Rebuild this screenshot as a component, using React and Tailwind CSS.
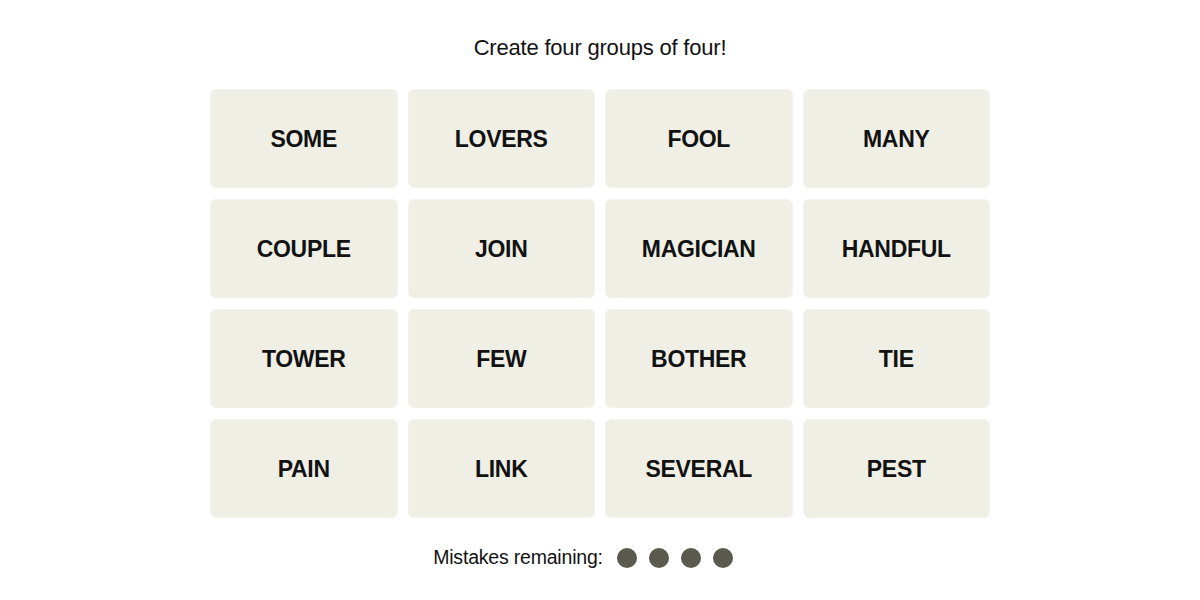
import React from "react";

const words = [
  "SOME", "LOVERS", "FOOL", "MANY",
  "COUPLE", "JOIN", "MAGICIAN", "HANDFUL",
  "TOWER", "FEW", "BOTHER", "TIE",
  "PAIN", "LINK", "SEVERAL", "PEST",
];

export default function App() {
  return (
    <div className="w-[1200px] h-[600px] bg-white flex flex-col items-center" style={{ fontFamily: '"Liberation Sans", Arial, sans-serif' }}>
      <div className="mt-[34px] h-[26px] flex items-center text-[22px] text-[#121212] tracking-[-0.2px]">
        Create four groups of four!
      </div>
      <div className="mt-[29px] grid grid-cols-4 gap-x-[10px] gap-y-[11px] w-[780px]">
        {words.map((w) => (
          <div
            key={w}
            className="h-[99px] rounded-[6px] bg-[#efefe6] border border-[#f3f3ec] flex items-center justify-center pt-[2px] text-[23px] font-bold text-[#121212] tracking-[-0.3px]"
          >
            {w}
          </div>
        ))}
      </div>
      <div className="mt-[25px] flex items-center h-[30px] pr-[34px]">
        <span className="text-[19.5px] text-[#121212] tracking-[-0.2px]">Mistakes remaining:</span>
        <div className="flex gap-[12px] ml-[14px]">
          <span className="w-[20px] h-[20px] rounded-full bg-[#5a594e]" />
          <span className="w-[20px] h-[20px] rounded-full bg-[#5a594e]" />
          <span className="w-[20px] h-[20px] rounded-full bg-[#5a594e]" />
          <span className="w-[20px] h-[20px] rounded-full bg-[#5a594e]" />
        </div>
      </div>
    </div>
  );
}
